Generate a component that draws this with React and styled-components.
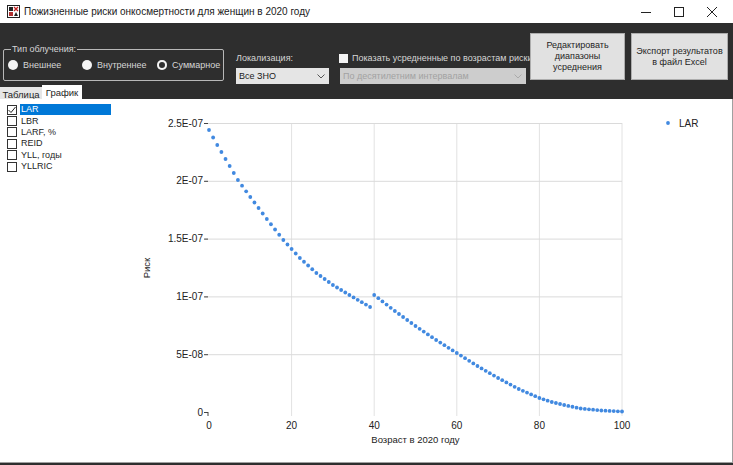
import React from "react";
import styled, { createGlobalStyle } from "styled-components";

const GlobalStyle = createGlobalStyle`
  html, body {
    margin: 0;
    padding: 0;
    background: #2e2e2e;
  }
  * {
    box-sizing: border-box;
  }
`;

const Window = styled.div`
  width: 733px;
  height: 465px;
  display: flex;
  flex-direction: column;
  background: #2e2e2e;
  font-family: "Liberation Sans", Arial, sans-serif;
  overflow: hidden;
`;

const TitleBar = styled.div`
  height: 23px;
  flex: none;
  background: #ffffff;
  display: flex;
  align-items: center;
  padding-left: 7px;
`;

const TitleText = styled.span`
  margin-left: 4px;
  font-size: 10px;
  color: #1a1a1a;
  flex: 1;
`;

const WindowControls = styled.div`
  display: flex;
  padding-right: 5px;
`;

const ControlButton = styled.div`
  width: 33px;
  height: 23px;
  display: flex;
  align-items: center;
  justify-content: center;
`;

const Toolbar = styled.div`
  height: 62px;
  flex: none;
  display: flex;
  align-items: flex-start;
  padding-left: 3px;
`;

const GroupBox = styled.fieldset`
  margin: 20px 0 0 0;
  padding: 0 0 0 4px;
  width: 221px;
  height: 38px;
  border: 1px solid #b8b8b8;
  border-radius: 2px;
  display: flex;
  align-items: center;
`;

const Legend = styled.legend`
  font-size: 9px;
  line-height: 12px;
  color: #d6d6d6;
  padding: 0 1px;
  margin-left: 3px;
`;

const RadioItem = styled.label`
  width: ${(p) => p.$w}px;
  display: flex;
  align-items: center;
  gap: 5px;
  font-size: 9px;
  color: #d6d6d6;
  margin-top: -6px;
  white-space: nowrap;
`;

const RadioDot = styled.span`
  width: 10px;
  height: 10px;
  border-radius: 50%;
  background: #f4f4f4;
  flex: none;
  box-shadow: ${(p) => (p.$checked ? "inset 0 0 0 2px #f4f4f4, inset 0 0 0 5px #2e2e2e" : "none")};
`;

const FieldColumn = styled.div`
  margin-left: ${(p) => p.$ml}px;
  margin-top: 29px;
  width: ${(p) => p.$w}px;
  display: flex;
  flex-direction: column;
  gap: 3px;
`;

const FieldLabel = styled.div`
  height: 13px;
  font-size: 9px;
  line-height: 13px;
  color: #d6d6d6;
  display: flex;
  align-items: center;
  gap: 4px;
  white-space: nowrap;
`;

const CheckSquare = styled.span`
  width: 9px;
  height: 9px;
  background: #f4f4f4;
  flex: none;
  margin-left: -1px;
`;

const Combo = styled.div`
  height: 16px;
  background: ${(p) => (p.$disabled ? "#cdcdcd" : "#e5e5e5")};
  color: ${(p) => (p.$disabled ? "#a2a2a2" : "#1c1c1c")};
  font-size: 9px;
  display: flex;
  align-items: center;
  justify-content: space-between;
  padding: 0 4px 0 3px;
  white-space: nowrap;
`;

const ActionButton = styled.div`
  margin-left: ${(p) => p.$ml}px;
  margin-top: 10px;
  width: ${(p) => p.$w}px;
  height: 47px;
  background: #e1e1e1;
  border: 1px solid #adadad;
  color: #1e1e1e;
  font-size: 9px;
  line-height: ${(p) => p.$lh}px;
  text-align: center;
  display: flex;
  align-items: center;
  justify-content: center;
  padding: 0 2px;
  white-space: nowrap;
`;

const TabStrip = styled.div`
  height: 14px;
  flex: none;
  display: flex;
  align-items: flex-end;
`;

const Tab = styled.div`
  height: ${(p) => (p.$active ? 14 : 12)}px;
  width: ${(p) => p.$w}px;
  background: ${(p) => (p.$active ? "#ffffff" : "#e6e6e6")};
  font-size: 9.5px;
  color: #1e1e1e;
  display: flex;
  align-items: center;
  justify-content: center;
  padding-top: ${(p) => (p.$active ? 0 : 2)}px;
`;

const Panel = styled.div`
  height: 364px;
  flex: none;
  background: #ffffff;
  border-right: 1px solid #a0a0a0;
  border-bottom: 1px solid #a0a0a0;
  display: flex;
`;

const CheckList = styled.div`
  width: 112px;
  flex: none;
  padding: 5px 1px 0 7px;
  display: flex;
  flex-direction: column;
`;

const ListRow = styled.div`
  height: 11.4px;
  display: flex;
  align-items: center;
  gap: 3px;
  font-size: 9px;
`;

const ListBox = styled.span`
  width: 10px;
  height: 10px;
  border: 1px solid #333333;
  background: #ffffff;
  flex: none;
  display: flex;
  align-items: center;
  justify-content: center;
`;

const ListText = styled.span`
  flex: 1;
  height: 11px;
  line-height: 11px;
  padding-left: 1px;
  background: ${(p) => (p.$selected ? "#0078d7" : "transparent")};
  color: ${(p) => (p.$selected ? "#ffffff" : "#1e1e1e")};
`;

const ChartArea = styled.div`
  flex: 1;
  display: flex;
`;

// ---- chart data ----
const X0 = 97;
const X1 = 510;
const YTOP = 24;
const YBOT = 313;
const sx = (a) => X0 + ((X1 - X0) * a) / 100;
const sy = (v) => YBOT - ((YBOT - YTOP) * v) / 2.5e-7;

// knots traced from the reference (pixel rows), converted back to risk values
const knotsA = [
  [0, 130], [2, 145], [4, 159], [7, 180], [10, 197], [14, 219], [18, 240],
  [22, 258], [26, 273], [30, 285], [34, 295], [39, 307],
];
const knotsB = [
  [40, 295], [45, 311], [50, 326], [55, 340], [60, 353], [65, 366], [70, 378],
  [75, 389], [80, 398], [83, 402], [86, 405], [90, 408.5], [95, 410.5], [100, 411.5],
];

const interp = (knots, a) => {
  for (let i = 0; i < knots.length - 1; i++) {
    const [a0, y0] = knots[i];
    const [a1, y1] = knots[i + 1];
    if (a >= a0 && a <= a1) return y0 + ((y1 - y0) * (a - a0)) / (a1 - a0);
  }
  return knots[knots.length - 1][1];
};

const toValue = (py) => ((412 - py) / 289) * 2.5e-7;

const points = [];
for (let a = 0; a <= 100; a++) {
  const py = a < 40 ? interp(knotsA, a) : interp(knotsB, a);
  points.push({ a, v: toValue(py) });
}

const yTicks = [
  { v: 2.5e-7, l: "2.5E-07" },
  { v: 2e-7, l: "2E-07" },
  { v: 1.5e-7, l: "1.5E-07" },
  { v: 1e-7, l: "1E-07" },
  { v: 5e-8, l: "5E-08" },
  { v: 0, l: "0" },
];
const xTicks = [0, 20, 40, 60, 80, 100];

const ScatterChart = () => (
  <svg width="619" height="363" viewBox="0 0 619 363" fontFamily="Liberation Sans, Arial, sans-serif">
    {xTicks.slice(1).map((t) => (
      <line key={"vx" + t} x1={sx(t)} x2={sx(t)} y1={YTOP} y2={YBOT + 4} stroke="#e2e2e2" strokeWidth="1" />
    ))}
    {yTicks.slice(0, -1).map((t) => (
      <line key={"hy" + t.l} x1={X0 - 4} x2={X1} y1={sy(t.v) + 0.5} y2={sy(t.v) + 0.5} stroke="#dadada" strokeWidth="1" />
    ))}
    {yTicks.map((t) => (
      <g key={"yl" + t.l}>
        <line x1={X0 - 5} x2={X0 - 1} y1={sy(t.v) + 0.5} y2={sy(t.v) + 0.5} stroke="#444" strokeWidth="1" />
        <text x={X0 - 6} y={sy(t.v) + 3.5} fontSize="10" textAnchor="end" fill="#222">
          {t.l}
        </text>
      </g>
    ))}
    <line x1={X0 - 1} x2={X0 - 1} y1={YBOT} y2={YBOT + 4} stroke="#444" strokeWidth="1" />
    {xTicks.map((t) => (
      <text key={"xl" + t} x={sx(t)} y={YBOT + 17} fontSize="10" textAnchor="middle" fill="#222">
        {t}
      </text>
    ))}
    <text x={(X0 + X1) / 2} y={YBOT + 31} fontSize="9.5" textAnchor="middle" fill="#222">
      Возраст в 2020 году
    </text>
    <text x={38} y={169} fontSize="9.5" textAnchor="middle" fill="#222" transform="rotate(-90 38 169)">
      Риск
    </text>
    {points.map((p) => (
      <circle key={p.a} cx={sx(p.a)} cy={sy(p.v)} r="1.9" fill="#4189e0" />
    ))}
    <circle cx={556} cy={24} r="1.9" fill="#4189e0" />
    <text x={567} y={27.5} fontSize="10" fill="#222">
      LAR
    </text>
  </svg>
);

const AppIcon = () => (
  <svg width="13" height="13" viewBox="0 0 13 13">
    <rect x="0.5" y="0.5" width="12" height="12" fill="#fff" stroke="#222" />
    <rect x="2" y="2" width="4" height="4" fill="#222" />
    <path d="M7 2 L11 6 M11 2 L7 6" stroke="#c02020" strokeWidth="1.3" />
    <rect x="2" y="7" width="4" height="4" fill="#b03030" />
    <path d="M7 11 L9 7 L11 11 Z" fill="#222" />
  </svg>
);

const listItems = ["LAR", "LBR", "LARF, %", "REID", "YLL, годы", "YLLRIC"];

const App = () => {
  return (
    <>
      <GlobalStyle />
      <Window>
        <TitleBar>
          <AppIcon />
          <TitleText>Пожизненные риски онкосмертности для женщин в 2020 году</TitleText>
          <WindowControls>
            <ControlButton>
              <svg width="10" height="10" viewBox="0 0 10 10">
                <path d="M0 5.5 H10" stroke="#222" strokeWidth="1" />
              </svg>
            </ControlButton>
            <ControlButton>
              <svg width="10" height="10" viewBox="0 0 10 10">
                <rect x="0.5" y="0.5" width="9" height="9" fill="none" stroke="#222" strokeWidth="1" />
              </svg>
            </ControlButton>
            <ControlButton>
              <svg width="10" height="10" viewBox="0 0 10 10">
                <path d="M0 0 L10 10 M10 0 L0 10" stroke="#222" strokeWidth="1" />
              </svg>
            </ControlButton>
          </WindowControls>
        </TitleBar>

        <Toolbar>
          <GroupBox>
            <Legend>Тип облучения:</Legend>
            <RadioItem $w={74}>
              <RadioDot />
              Внешнее
            </RadioItem>
            <RadioItem $w={75}>
              <RadioDot />
              Внутреннее
            </RadioItem>
            <RadioItem $w={66}>
              <RadioDot $checked />
              Суммарное
            </RadioItem>
          </GroupBox>

          <FieldColumn $ml={12} $w={93}>
            <FieldLabel>Локализация:</FieldLabel>
            <Combo>
              <span>Все ЗНО</span>
              <svg width="8" height="5" viewBox="0 0 8 5">
                <path d="M0.5 0.5 L4 4 L7.5 0.5" fill="none" stroke="#555" strokeWidth="1" />
              </svg>
            </Combo>
          </FieldColumn>

          <FieldColumn $ml={11} $w={186}>
            <FieldLabel>
              <CheckSquare />
              Показать усредненные по возрастам риски
            </FieldLabel>
            <Combo $disabled>
              <span>По десятилетним интервалам</span>
              <svg width="8" height="5" viewBox="0 0 8 5">
                <path d="M0.5 0.5 L4 4 L7.5 0.5" fill="none" stroke="#aaa" strokeWidth="1" />
              </svg>
            </Combo>
          </FieldColumn>

          <ActionButton $ml={4} $w={95} $lh={11}>
            Редактировать
            <br />
            диапазоны
            <br />
            усреднения
          </ActionButton>
          <ActionButton $ml={6} $w={97} $lh={10.5}>
            Экспорт результатов
            <br />в файл Excel
          </ActionButton>
        </Toolbar>

        <TabStrip>
          <Tab $w={42}>Таблица</Tab>
          <Tab $w={40} $active>
            График
          </Tab>
        </TabStrip>

        <Panel>
          <CheckList>
            {listItems.map((item, i) => (
              <ListRow key={item}>
                <ListBox>
                  {i === 0 && (
                    <svg width="8" height="8" viewBox="0 0 8 8">
                      <path d="M0.5 4 L3 6.5 L7.5 1" fill="none" stroke="#222" strokeWidth="1" />
                    </svg>
                  )}
                </ListBox>
                <ListText $selected={i === 0}>{item}</ListText>
              </ListRow>
            ))}
          </CheckList>
          <ChartArea>
            <ScatterChart />
          </ChartArea>
        </Panel>
      </Window>
    </>
  );
};

export default App;
